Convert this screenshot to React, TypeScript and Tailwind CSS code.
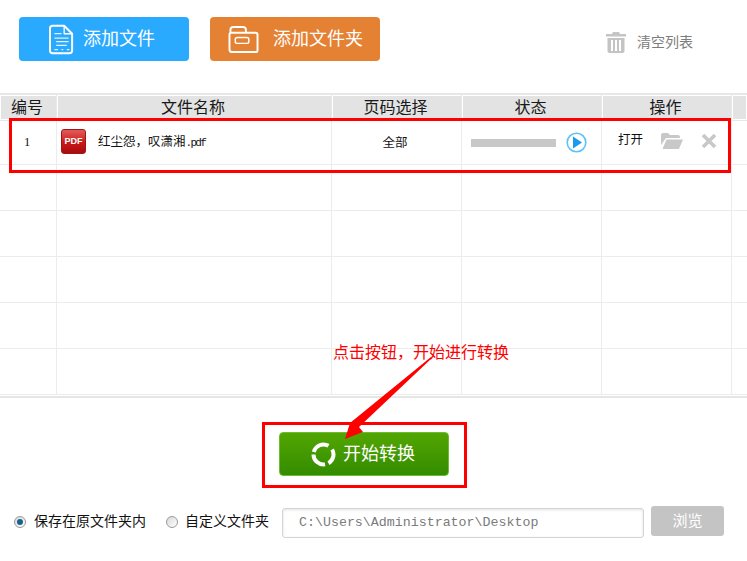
const cols = 'grid grid-cols-[57px_275px_130px_140px_130px_15px]'
const cjk = "font-['Liberation_Sans','Noto_Sans_CJK_SC',sans-serif]"
const headers = ['编号', '文件名称', '页码选择', '状态', '操作', '']

function FileIcon() {
  return (
    <svg width="25" height="31" viewBox="0 0 28 35" fill="none" stroke="#fff" strokeWidth="2.200" strokeLinejoin="round">
      <path d="M4 2h13l9 9v19a3 3 0 0 1-3 3H4a3 3 0 0 1-3-3V5a3 3 0 0 1 3-3z" />
      <path d="M17 2v9h9" strokeWidth="1.500" />
      <path d="M6 11h8M6 16h16M8 20h14M8 24h12M6 29h4M14 29h2M20 29h3" strokeWidth="1.400" opacity="0.85" />
    </svg>
  )
}

function FolderIcon() {
  return (
    <svg width="33" height="29" viewBox="0 0 33 30" fill="none" stroke="#fff" strokeWidth="2" strokeLinejoin="round">
      <path d="M3 8V5a3 3 0 0 1 3-3h10a3 3 0 0 1 3 3v3" />
      <path d="M2 10a2 2 0 0 1 2-2h25a2 2 0 0 1 2 2v16a2 2 0 0 1-2 2H5a3 3 0 0 1-3-3z" />
      <rect x="8" y="13" width="14" height="6" rx="2" strokeWidth="1.500" />
    </svg>
  )
}

function TrashIcon() {
  return (
    <svg width="20" height="21" viewBox="0 0 20 21" fill="#c4c4c4">
      <path d="M7 0h6l1 2h6v2.500H0V2h6z" />
      <path d="M1.500 6h17v13a2 2 0 0 1-2 2h-13a2 2 0 0 1-2-2zM5 8v11h2V8zm4 0v11h2V8zm4 0v11h2V8z" fillRule="evenodd" />
    </svg>
  )
}

function PdfIcon() {
  return (
    <div className="flex h-[25px] w-[25px] items-center justify-center rounded-[3px] border border-[#a01616] bg-gradient-to-b from-[#e25a5a] via-[#cc1a1a] to-[#a80c0c]">
      <span className="font-['Liberation_Sans',sans-serif] text-[9px] leading-none font-bold text-white">PDF</span>
    </div>
  )
}

function PlayIcon() {
  return (
    <svg width="21" height="21" viewBox="0 0 21 21">
      <circle cx="10.500" cy="10.500" r="9.300" fill="#fff" stroke="#5cc0fa" strokeWidth="1.600" />
      <path d="M7 4.500l9 6-9 6z" fill="#1e9be8" />
    </svg>
  )
}

function OpenFolderIcon() {
  return (
    <svg width="22" height="16" viewBox="0 0 22 16" fill="#c8c8c8">
      <path d="M0 2a2 2 0 0 1 2-2h5l2 2h8a2 2 0 0 1 2 2v1H5L0 12z" />
      <path d="M5.500 6.500H22L18 16H1.500z" />
    </svg>
  )
}

function CloseIcon() {
  return (
    <svg width="16" height="16" viewBox="0 0 16 16">
      <path d="M2 2l12 12M14 2L2 14" stroke="#c8c8c8" strokeWidth="3.600" />
    </svg>
  )
}

function SpinIcon() {
  return (
    <svg width="25" height="25" viewBox="0 0 25 25" fill="none" stroke="#fff" strokeWidth="4">
      <path d="M2.840 9.910A10 10 0 0 1 17.500 3.840" />
      <path d="M21.160 7.500A10 10 0 0 1 17.500 21.160" />
      <path d="M14.060 22.380A10 10 0 0 1 2.500 12.500" />
    </svg>
  )
}

function Radio({ checked }: { checked?: boolean }) {
  return (
    <span className="flex h-[12px] w-[12px] items-center justify-center rounded-full border border-[#9a9a9a] bg-gradient-to-br from-[#d8d8d8] to-white">
      {checked && <span className="h-[6px] w-[6px] rounded-full bg-[#14638f]" />}
    </span>
  )
}

export default function App() {
  return (
    <div className={`relative h-[561px] w-[747px] overflow-hidden bg-white ${cjk}`}>
      <div className="flex h-[93px] items-start pt-[17px] pl-[19px]">
        <button type="button" className="flex h-[44px] w-[170px] items-center justify-center gap-[9px] rounded-[4px] bg-[#2aaaff] pr-[4px] text-[18px] text-white">
          <FileIcon />
          <span>添加文件</span>
        </button>
        <button type="button" className="ml-[21px] flex h-[44px] w-[170px] items-center justify-center gap-[13px] rounded-[4px] bg-[#e58133] text-[18px] text-white">
          <FolderIcon />
          <span>添加文件夹</span>
        </button>
        <div className="ml-[226px] flex h-[44px] items-center gap-[11px] pt-[6px] text-[14px] text-[#7d7d7d]">
          <TrashIcon />
          <span>清空列表</span>
        </div>
      </div>

      <div className="border-y-2 border-[#e6e6e6] pb-[1px]">
        <div className={`${cols} h-[24px] text-[16px] leading-[23px] text-[#1a1a1a]`}>
          {headers.map((h, i) => (
            <div key={i} className="border border-white bg-[#e3e3e3] pr-[3px] text-center outline outline-[#e8e8e8]">{h}</div>
          ))}
        </div>
        <div className={`${cols} h-[46px] border-b border-[#ececec] text-[12.500px] text-[#111]`}>
          <div className="flex items-center justify-center border-r border-[#ececec] pt-[2px] pr-[2px] font-['Liberation_Serif',serif]">1</div>
          <div className="flex items-center gap-[12px] border-r border-[#ececec] pl-[4px]">
            <PdfIcon />
            <span className="pt-[2px]">红尘怨，叹潇湘<span className="font-['Liberation_Mono',monospace] text-[11px] tracking-[-1.700px]">.pdf</span></span>
          </div>
          <div className="flex items-center justify-center border-r border-[#ececec] pt-[3px] pr-[3px]">全部</div>
          <div className="flex items-center gap-[10px] border-r border-[#ececec] pt-[2px] pl-[9px]">
            <div className="h-[8px] w-[85px] bg-[#c8c8c8]" />
            <PlayIcon />
          </div>
          <div className="flex items-center border-r border-[#ececec] pb-[2px] pl-[16px]">
            <span>打开</span>
            <span className="ml-[18px]"><OpenFolderIcon /></span>
            <span className="ml-[18px]"><CloseIcon /></span>
          </div>
          <div />
        </div>
        {[0, 1, 2, 3, 4].map((r) => (
          <div key={r} className={`${cols} h-[46px] border-b border-[#ececec]`}>
            <div className="border-r border-[#ececec]" />
            <div className="border-r border-[#ececec]" />
            <div className="border-r border-[#ececec]" />
            <div className="border-r border-[#ececec]" />
            <div className="border-r border-[#ececec]" />
            <div />
          </div>
        ))}
      </div>

      <div className="flex justify-center pt-[34px] pr-[19px]">
        <button type="button" className="flex h-[44px] w-[170px] items-center justify-center gap-[7px] rounded-[4px] border border-[#6dbb2e] bg-gradient-to-b from-[#52a602] to-[#338c00] pr-[2px] text-[18px] text-white">
          <SpinIcon />
          <span>开始转换</span>
        </button>
      </div>

      <div className="flex h-[62px] items-start pt-[30px] pl-[14px] text-[14px] text-[#111]">
        <div className="flex h-[30px] items-center pt-[1px]">
          <Radio checked />
          <span className="ml-[8px]">保存在原文件夹内</span>
          <span className="ml-[20px]"><Radio /></span>
          <span className="ml-[7px]">自定义文件夹</span>
        </div>
        <div className="mt-[2px] ml-[13px] flex h-[30px] w-[362px] items-center rounded-[3px] border border-[#d4d4d4] pl-[16px] font-['Liberation_Mono',monospace] text-[13.300px] text-[#7b7b7b] shadow-[inset_0_1px_3px_#e2e2e2]">
          C:\Users\Administrator\Desktop
        </div>
        <button type="button" className="ml-[7px] h-[30px] w-[73px] rounded-[3px] bg-[#c4c4c4] text-[15px] text-white">浏览</button>
      </div>

      <div className="absolute top-[118px] left-[9px] h-[55px] w-[722px] border-[3px] border-[#f00]" />
      <div className="absolute top-[422px] left-[262px] h-[66px] w-[205px] border-[3px] border-[#f00]" />
      <div className="absolute top-[343px] left-[333px] text-[16px] leading-[20px] text-[#f00]">点击按钮，开始进行转换</div>
      <svg className="absolute top-[355px] left-[340px]" width="95" height="85" viewBox="0 0 95 85">
        <path d="M91 2L10 68 5 84 23 77 19 72 92 3z" fill="#f00" />
      </svg>
    </div>
  )
}
